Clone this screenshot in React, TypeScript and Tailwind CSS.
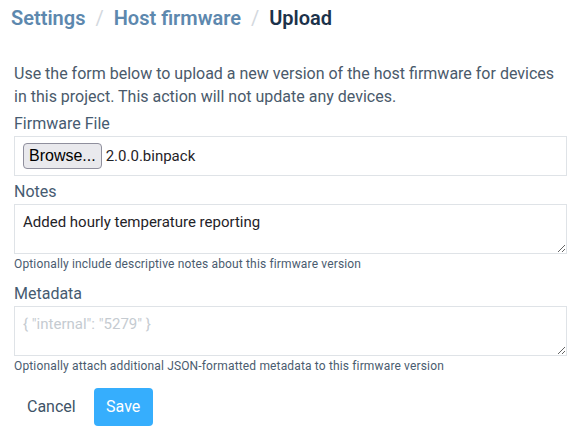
import React from 'react';

const font = { fontFamily: 'Roboto, "Noto Sans", sans-serif' };

export default function App() {
  return (
    <div className="bg-white w-[581px] h-[439px] overflow-hidden px-[14px]" style={font}>
      <h1 className="text-[20px] font-semibold leading-[36px] -ml-[3px] flex gap-[10px]">
        <span className="text-[#5d88ae]">Settings</span>
        <span className="text-[#d3d8de] font-normal">/</span>
        <span className="text-[#5d88ae]">Host firmware</span>
        <span className="text-[#d3d8de] font-normal">/</span>
        <span className="text-[#1c324a]">Upload</span>
      </h1>

      <p className="mt-[26px] text-[16px] leading-[23px] text-[#4a5a6b]">
        Use the form below to upload a new version of the host firmware for devices in this
        project. This action will not update any devices.
      </p>

      <label className="block mt-[4px] text-[16px] leading-[24px] text-[#465b71]">Firmware File</label>
      <div className="h-[40px] border border-[#dfe3e7] flex items-center px-[8px]">
        <button
          type="button"
          className="h-[26px] px-[5px] rounded-[4px] border border-[#8f8f9d] bg-[#e9e9ed] text-[16px] leading-none text-black font-['Liberation_Sans',sans-serif]"
        >
          Browse...
        </button>
        <span className="ml-[4px] text-[15px] text-[#1f2328]">2.0.0.binpack</span>
      </div>

      <label className="block mt-[4px] text-[16px] leading-[24px] text-[#465b71]">Notes</label>
      <textarea
        className="block w-full h-[50px] border border-[#dfe3e7] px-[8px] py-[6px] text-[15px] text-[#1f2328] outline-none"
        defaultValue="Added hourly temperature reporting"
      />
      <p className="mt-[2px] text-[12px] leading-[16px] tracking-[0.15px] text-[#4a5c6f]">
        Optionally include descriptive notes about this firmware version
      </p>

      <label className="block mt-[10px] text-[16px] leading-[24px] text-[#465b71]">Metadata</label>
      <textarea
        className="block w-full h-[50px] border border-[#dfe3e7] px-[8px] py-[6px] text-[15px] text-[#1f2328] placeholder:text-[#c5cbd1] outline-none"
        placeholder='{ "internal": "5279" }'
      />
      <p className="mt-[2px] text-[12px] leading-[16px] tracking-[0.15px] text-[#4a5c6f]">
        Optionally attach additional JSON-formatted metadata to this firmware version
      </p>

      <div className="mt-[14px] flex items-center gap-[5px]">
        <button type="button" className="h-[38px] px-[13px] text-[16px] text-[#3e5367]">
          Cancel
        </button>
        <button type="button" className="h-[38px] w-[59px] rounded-[4px] bg-[#36aefd] text-[16px] text-white">
          Save
        </button>
      </div>
    </div>
  );
}
